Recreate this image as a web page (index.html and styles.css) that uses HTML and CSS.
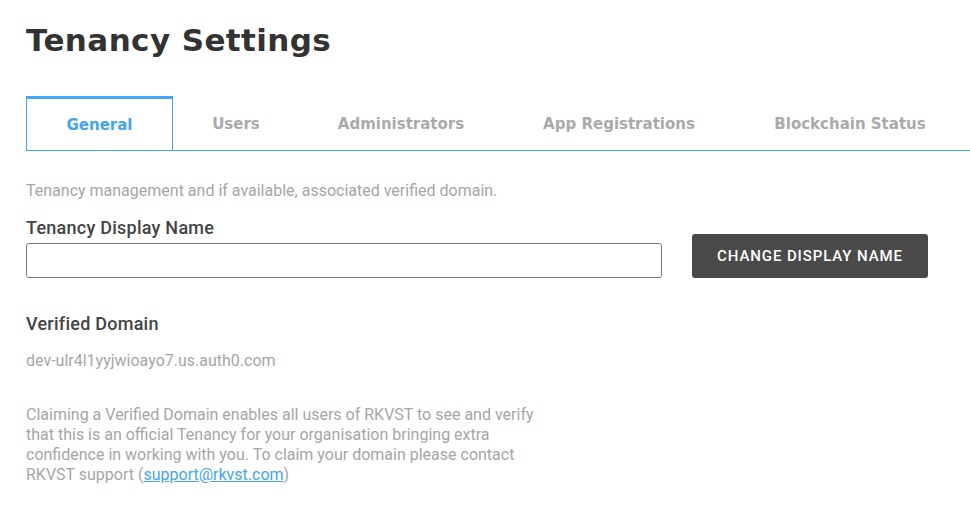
FILE: index.html
```html
<!DOCTYPE html>
<html lang="en">
<head>
<meta charset="utf-8">
<title>Tenancy Settings</title>
<link rel="stylesheet" href="styles.css">
</head>
<body>
<main class="page">
  <h1 class="title">Tenancy Settings</h1>
  <nav class="tabs">
    <div class="tab active">General</div>
    <div class="tab tab-users">Users</div>
    <div class="tab tab-admins">Administrators</div>
    <div class="tab tab-apps">App Registrations</div>
    <div class="tab tab-chain">Blockchain Status</div>
  </nav>
  <section class="content">
    <p class="intro">Tenancy management and if available, associated verified domain.</p>
    <div class="name-row">
      <div class="field">
        <label class="label" for="dn">Tenancy Display Name</label>
        <input id="dn" class="input" type="text">
      </div>
      <button class="btn">Change Display Name</button>
    </div>
    <h2 class="label verified">Verified Domain</h2>
    <p class="domain">dev-ulr4l1yyjwioayo7.us.auth0.com</p>
    <p class="claim">Claiming a Verified Domain enables all users of RKVST to see and verify that this is an official Tenancy for your organisation bringing extra confidence in working with you. To claim your domain please contact RKVST support (<a href="#" class="link">support@rkvst.com</a>)</p>
  </section>
</main>
</body>
</html>
```

FILE: styles.css
```css
* { box-sizing: border-box; }
html, body { margin: 0; padding: 0; background: #fff; }
body { font-family: Roboto, "Liberation Sans", sans-serif; color: #444; }
.page { padding: 0 0 0 26px; }
.title {
  margin: 0;
  padding-top: 20px;
  font-family: "DejaVu Sans", sans-serif;
  font-weight: 700;
  font-size: 31px;
  line-height: 40px;
  color: #333;
  letter-spacing: 0.4px;
}
.tabs {
  display: flex;
  margin-top: 36px;
  border-bottom: 1px solid #42a5f5;
  height: 55px;
}
.tab {
  display: flex;
  align-items: center;
  justify-content: center;
  font-family: "DejaVu Sans", sans-serif;
  font-weight: 700;
  font-size: 15px;
  color: #aaa;
  padding-top: 1px;
}
.tab.active {
  width: 147px;
  color: #42a5f5;
  border: 1px solid #42a5f5;
  border-top: 3px solid #42a5f5;
  border-bottom: none;
  padding-top: 0;
}
.tab-users { width: 126px; }
.tab-admins { width: 204px; }
.tab-apps { width: 232px; }
.tab-chain { width: 230px; }
.content { width: 910px; }
.intro {
  margin: 30px 0 0;
  font-size: 16px;
  line-height: 20px;
  color: #a6a6a6;
}
.name-row {
  display: flex;
  align-items: flex-end;
  margin-top: 16px;
}
.field { display: flex; flex-direction: column; }
.label {
  display: block;
  margin: 0;
  font-size: 18px;
  font-weight: 500;
  line-height: 22px;
  letter-spacing: 0.25px;
  color: #444;
}
.input {
  margin-top: 4px;
  width: 636px;
  height: 35px;
  border: 1px solid #777;
  border-radius: 3px;
  font: inherit;
}
.btn {
  margin-left: 30px;
  margin-bottom: -2px;
  width: 236px;
  height: 44px;
  background: #4a4a4a;
  color: #fff;
  border: none;
  border-radius: 3px;
  font-family: Roboto, sans-serif;
  font-weight: 500;
  font-size: 15px;
  letter-spacing: 0.9px;
  text-transform: uppercase;
  position: relative;
  top: -2px;
}
.verified { margin-top: 35px; }
.domain {
  margin: 16px 0 0;
  font-size: 16px;
  line-height: 20px;
  color: #a6a6a6;
}
.claim {
  margin: 34px 0 0;
  width: 536px;
  font-size: 16px;
  line-height: 20px;
  color: #a6a6a6;
}
.link { color: #42a5f5; }
```
